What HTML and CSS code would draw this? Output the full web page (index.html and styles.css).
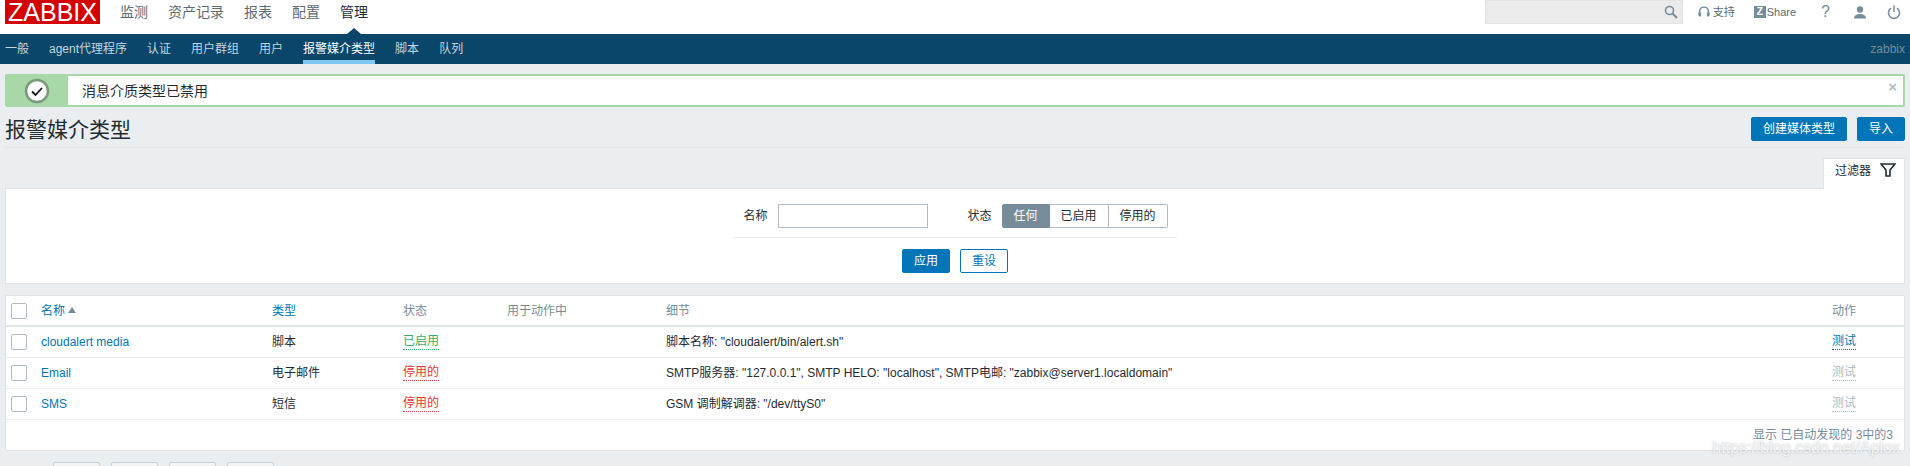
FILE: index.html
```html
<!DOCTYPE html>
<html lang="zh">
<head>
<meta charset="utf-8">
<title>报警媒介类型</title>
<link rel="stylesheet" href="styles.css">
</head>
<body>
<header class="topnav">
  <div class="logo">ZABBIX</div>
  <nav class="mainmenu">
    <a>监测</a><a>资产记录</a><a>报表</a><a>配置</a><a class="active">管理</a>
  </nav>
  <div class="tools">
    <div class="search">
      <svg class="search-icon" width="14" height="14" viewBox="0 0 14 14"><circle cx="5.5" cy="5.5" r="4" fill="none" stroke="#768d99" stroke-width="1.6"/><path d="M8.5 8.5L13 13" stroke="#768d99" stroke-width="2"/></svg>
    </div>
    <a class="tool support">
      <svg width="12" height="13" viewBox="0 0 12 13"><path d="M1.5 8V5.5a4.5 4.5 0 0 1 9 0V8" fill="none" stroke="#768d99" stroke-width="1.5"/><rect x="0.5" y="6" width="2.5" height="4.5" rx="1" fill="#768d99"/><rect x="9" y="6" width="2.5" height="4.5" rx="1" fill="#768d99"/></svg>
      <span>支持</span>
    </a>
    <a class="tool share"><span class="zbadge">Z</span><span>Share</span></a>
    <a class="tool help">?</a>
    <a class="tool user">
      <svg width="14" height="13" viewBox="0 0 14 13"><circle cx="7" cy="3.5" r="3.2" fill="#768d99"/><path d="M1 12.5c0-3 2.5-4.5 6-4.5s6 1.500 6 4.500z" fill="#768d99"/></svg>
    </a>
    <a class="tool power">
      <svg width="14" height="14" viewBox="0 0 14 14"><path d="M4 3.200a5.500 5.500 0 1 0 6 0" fill="none" stroke="#768d99" stroke-width="1.500"/><path d="M7 0.500V7" stroke="#768d99" stroke-width="1.500"/></svg>
    </a>
  </div>
</header>

<nav class="submenu">
  <a>一般</a><a>agent代理程序</a><a>认证</a><a>用户群组</a><a>用户</a><a class="active">报警媒介类型</a><a>脚本</a><a>队列</a>
  <span class="subuser">zabbix</span>
</nav>

<main class="content">
  <div class="message">
    <div class="msg-icon">
      <svg width="26" height="26" viewBox="0 0 26 26"><circle cx="13" cy="13" r="11" fill="#fff" stroke="#7a9a7c" stroke-width="2.500"/><path d="M8 13.500l3.500 3.500 6.500-7" fill="none" stroke="#111" stroke-width="1.800"/></svg>
    </div>
    <div class="msg-text">消息介质类型已禁用</div>
    <span class="msg-close">×</span>
  </div>

  <div class="page-head">
    <h1>报警媒介类型</h1>
    <div class="head-actions">
      <button class="btn wide">创建媒体类型</button>
      <button class="btn">导入</button>
    </div>
  </div>

  <div class="filter-tabs">
    <div class="filter-tab">
      <span>过滤器</span>
      <svg width="16" height="14" viewBox="0 0 16 14"><path d="M1 1h14L10 7v6H6V7z" fill="none" stroke="#1f2c33" stroke-width="1.600"/></svg>
    </div>
  </div>

  <section class="filter">
    <div class="filter-row">
      <label>名称</label>
      <input class="text-input" type="text">
      <label class="status-label">状态</label>
      <div class="segments">
        <span class="seg on">任何</span><span class="seg">已启用</span><span class="seg">停用的</span>
      </div>
    </div>
    <div class="filter-actions">
      <button class="btn">应用</button>
      <button class="btn alt">重设</button>
    </div>
  </section>

  <section class="list">
    <table>
      <colgroup>
        <col class="c-check"><col class="c-name"><col class="c-type"><col class="c-status"><col class="c-used"><col><col class="c-action">
      </colgroup>
      <thead>
        <tr>
          <th><span class="check"></span></th>
          <th><a class="link">名称</a><i class="sort"></i></th>
          <th><a class="link">类型</a></th>
          <th>状态</th>
          <th>用于动作中</th>
          <th>细节</th>
          <th>动作</th>
        </tr>
      </thead>
      <tbody>
        <tr>
          <td><span class="check"></span></td>
          <td><a class="link">cloudalert media</a></td>
          <td>脚本</td>
          <td><a class="state ok">已启用</a></td>
          <td></td>
          <td>脚本名称: "cloudalert/bin/alert.sh"</td>
          <td><a class="state test">测试</a></td>
        </tr>
        <tr>
          <td><span class="check"></span></td>
          <td><a class="link">Email</a></td>
          <td>电子邮件</td>
          <td><a class="state off">停用的</a></td>
          <td></td>
          <td>SMTP服务器: "127.0.0.1", SMTP HELO: "localhost", SMTP电邮: "zabbix@server1.localdomain"</td>
          <td><a class="state dim">测试</a></td>
        </tr>
        <tr>
          <td><span class="check"></span></td>
          <td><a class="link">SMS</a></td>
          <td>短信</td>
          <td><a class="state off">停用的</a></td>
          <td></td>
          <td>GSM 调制解调器: "/dev/ttyS0"</td>
          <td><a class="state dim">测试</a></td>
        </tr>
      </tbody>
    </table>
    <div class="list-foot">显示 已自动发现的 3中的3</div>
  </section>

  <div class="pager">
    <button class="page-btn"></button><button class="page-btn"></button><button class="page-btn"></button><button class="page-btn"></button>
  </div>
</main>
<div class="watermark">https://blog.csdn.net/Aplox</div>
</body>
</html>
```

FILE: styles.css
```css
* { box-sizing: border-box; }
html, body { height: 466px; overflow: hidden; }
body {
  margin: 0;
  position: relative;
  background: #ebeef0;
  color: #1f2c33;
  font: 12px/14px "Liberation Sans", "Noto Sans CJK SC", sans-serif;
}
a { text-decoration: none; }

.topnav { height: 34px; background: #fff; display: flex; align-items: flex-start; padding-left: 5px; }
.logo { width: 95px; height: 24px; background: #d40000; color: #fff; font-size: 25px; line-height: 24px; text-align: center; }
.mainmenu { display: flex; gap: 20px; margin-left: 20px; font-size: 14px; line-height: 16px; color: #5a6c75; padding-top: 4px; }
.mainmenu a { position: relative; }
.mainmenu a.active { color: #1f2c33; }
.mainmenu a.active::after {
  content: ""; position: absolute; left: 7px; top: 24px;
  border-left: 7px solid transparent; border-right: 7px solid transparent; border-bottom: 6px solid #0a466a;
}
.tools { margin-left: auto; display: flex; align-items: flex-start; padding-right: 9px; color: #768d99; }
.search { width: 198px; height: 24px; background: #ebebeb; border: 1px solid #e3e3e3; position: relative; }
.search-icon { position: absolute; right: 4px; top: 4px; }
.tool { display: flex; align-items: center; height: 24px; font-size: 11px; color: #5a6c75; }
.support { margin-left: 15px; gap: 3px; }
.share { margin-left: 19px; }
.zbadge { width: 12px; height: 12px; background: #768d99; color: #fff; font-size: 10px; line-height: 12px; font-weight: bold; text-align: center; margin-right: 1px; }
.help { margin-left: 25px; font-size: 16px; color: #768d99; }
.user { margin-left: 23px; }
.power { margin-left: 20px; }

.submenu { height: 30px; background: #0a466a; display: flex; gap: 20px; padding: 0 5px; color: #c5d5df; line-height: 30px; }
.submenu a { display: block; height: 30px; }
.submenu a.active { color: #fff; border-bottom: 4px solid #7fc6f3; }
.subuser { margin-left: auto; color: #768d99; }

.content { padding: 10px 5px 0; }

.message { height: 33px; border: 2px solid #a8d8a8; border-radius: 2px; background: #fff; display: flex; align-items: center; position: relative; }
.msg-icon { width: 61px; height: 100%; background: #a8d8a8; display: flex; align-items: center; justify-content: center; }
.msg-icon svg { margin-right: 2px; }
.msg-text { margin-left: 14px; font-size: 14px; color: #1f2c33; }
.msg-close { position: absolute; right: 6px; top: 2px; color: #aebfc8; font-size: 15px; line-height: 18px; font-weight: bold; }

.page-head { height: 41px; padding-top: 10px; display: flex; justify-content: space-between; align-items: flex-start; border-bottom: 1px solid #dfe4e7; }
h1 { margin: 0; font-size: 21px; line-height: 26px; font-weight: normal; color: #1f2c33; }
.head-actions { display: flex; gap: 10px; }
.btn { height: 24px; width: 48px; padding: 0; border: 1px solid #0275b8; border-radius: 2px; background: #0275b8; color: #fff; font: 12px/20px "Liberation Sans", "Noto Sans CJK SC", sans-serif; }
.btn.alt { background: #fff; color: #0275b8; }
.btn.wide { width: 96px; }

.filter-tabs { margin-top: 10px; display: flex; justify-content: flex-end; height: 31px; position: relative; z-index: 1; margin-bottom: -1px; }
.filter-tab { width: 82px; height: 31px; background: #fff; border: 1px solid #dfe4e7; border-bottom: 0; padding: 5px 8px 0 11px; display: flex; justify-content: space-between; align-items: flex-start; }
.filter-tab svg { margin-top: -1px; }

.filter { height: 96px; background: #fff; border: 1px solid #dfe4e7; display: flex; flex-direction: column; align-items: center; padding-top: 15px; }
.filter-row { width: 443px; height: 34px; padding: 0 9px 0 10px; border-bottom: 1px solid #ebeef0; display: flex; align-items: flex-start; }
.filter-row label { line-height: 24px; width: 24px; white-space: nowrap; }
.text-input { width: 150px; height: 24px; margin-left: 10px; border: 1px solid #acbbc4; background: #fff; padding: 0; }
.status-label { margin-left: 40px; }
.segments { display: flex; margin-left: 10px; height: 24px; }
.seg { width: 59px; height: 24px; border: 1px solid #acbbc4; border-left: 0; line-height: 22px; text-align: center; }
.seg.on { width: 48px; background: #768d99; color: #fff; border: 1px solid #768d99; border-radius: 2px 0 0 2px; }
.seg:last-child { border-radius: 0 2px 2px 0; }
.filter-actions { display: flex; gap: 10px; margin-top: 11px; }

.list { margin-top: 11px; height: 156px; background: #fff; border: 1px solid #dfe4e7; position: relative; }
table { width: 100%; border-collapse: collapse; table-layout: fixed; }
.c-check { width: 30px; }
.c-name { width: 231px; }
.c-type { width: 131px; }
.c-status { width: 104px; }
.c-used { width: 159px; }
.c-action { width: 77px; }
th, td { padding: 0 5px; text-align: left; font-weight: normal; white-space: nowrap; overflow: hidden; }
th { height: 30px; color: #768d99; border-bottom: 2px solid #dfe4e7; }
td { height: 31px; border-bottom: 1px solid #ebeef0; }
.check { display: block; width: 16px; height: 16px; border: 1px solid #acbbc4; border-radius: 2px; background: #fff; }
.link { color: #0275b8; }
.sort { display: inline-block; margin-left: 3px; vertical-align: 2px; border-left: 4px solid transparent; border-right: 4px solid transparent; border-bottom: 6px solid #768d99; }
.state { display: inline-block; border-bottom: 1px dotted; line-height: 15px; }
.state.ok { color: #34af67; border-color: #34af67; }
.state.off { color: #e33734; border-color: #e33734; }
.state.test { color: #0275b8; border-color: #0275b8; }
.state.dim { color: #acbbc4; border-color: #acbbc4; }
.list-foot { position: absolute; right: 11px; bottom: 8px; color: #768d99; }

.pager { margin-top: 11px; margin-left: 48px; display: flex; gap: 11px; }
.page-btn { width: 47px; height: 24px; background: #f2f4f5; border: 1px solid #c6d0d6; border-radius: 2px; padding: 0; }

.watermark { position: absolute; right: 10px; top: 441px; font-size: 16px; line-height: 14px; color: rgba(255,255,255,.8); text-shadow: 0 0 2px rgba(120,130,140,.6); }
```
